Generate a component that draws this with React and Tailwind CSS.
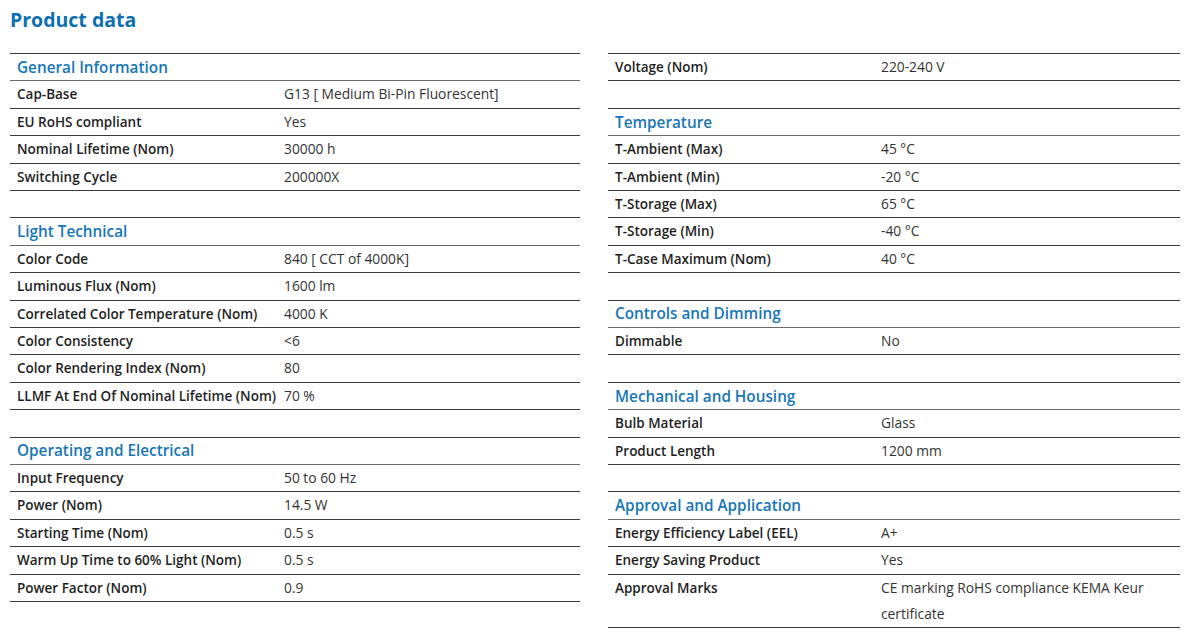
import React from "react";

const left = [
  { h: "General Information" },
  ["Cap-Base", "G13 [ Medium Bi-Pin Fluorescent]"],
  ["EU RoHS compliant", "Yes"],
  ["Nominal Lifetime (Nom)", "30000 h"],
  ["Switching Cycle", "200000X"],
  null,
  { h: "Light Technical" },
  ["Color Code", "840 [ CCT of 4000K]"],
  ["Luminous Flux (Nom)", "1600 lm"],
  ["Correlated Color Temperature (Nom)", "4000 K"],
  ["Color Consistency", "<6"],
  ["Color Rendering Index (Nom)", "80"],
  ["LLMF At End Of Nominal Lifetime (Nom)", "70 %"],
  null,
  { h: "Operating and Electrical" },
  ["Input Frequency", "50 to 60 Hz"],
  ["Power (Nom)", "14.5 W"],
  ["Starting Time (Nom)", "0.5 s"],
  ["Warm Up Time to 60% Light (Nom)", "0.5 s"],
  ["Power Factor (Nom)", "0.9"],
];

const right = [
  ["Voltage (Nom)", "220-240 V"],
  null,
  { h: "Temperature" },
  ["T-Ambient (Max)", "45 °C"],
  ["T-Ambient (Min)", "-20 °C"],
  ["T-Storage (Max)", "65 °C"],
  ["T-Storage (Min)", "-40 °C"],
  ["T-Case Maximum (Nom)", "40 °C"],
  null,
  { h: "Controls and Dimming" },
  ["Dimmable", "No"],
  null,
  { h: "Mechanical and Housing" },
  ["Bulb Material", "Glass"],
  ["Product Length", "1200 mm"],
  null,
  { h: "Approval and Application" },
  ["Energy Efficiency Label (EEL)", "A+"],
  ["Energy Saving Product", "Yes"],
  ["Approval Marks", "CE marking RoHS compliance KEMA Keur certificate"],
];

function Rows({ items, labelW }) {
  return (
    <div className="border-t border-[#3a3a3a]">
      {items.map((r, i) => {
        if (r === null)
          return <div key={i} className="h-[27.4px] border-b border-[#3a3a3a]" />;
        if (r.h)
          return (
            <div
              key={i}
              className="h-[27.4px] flex items-center px-[7px] border-b border-[#6a6a6a] text-[15.3px] font-semibold text-[#1776b6]"
            >
              {r.h}
            </div>
          );
        return (
          <div key={i} className="flex items-baseline min-h-[27.4px] border-b border-[#3a3a3a] leading-[26.4px]">
            <div className={`${labelW} shrink-0 pl-[7px] text-[13.5px] font-semibold text-[#1e1e1e] whitespace-nowrap`}>
              {r[0]}
            </div>
            <div className="flex-1 pl-[8px] pr-2 text-[13.8px] leading-[26.4px] text-[#333]">{r[1]}</div>
          </div>
        );
      })}
    </div>
  );
}

export default function App() {
  return (
    <main
      className="min-h-screen bg-white px-[10px] pt-[6px]"
      style={{ fontFamily: "'Open Sans', 'Noto Sans', sans-serif" }}
    >
      <h1 className="text-[19.5px] leading-[28px] font-bold text-[#0c6fb2]">Product data</h1>
      <div className="mt-[19px] flex gap-[28px] w-[1170px]">
        <div className="w-[570px]">
          <Rows items={left} labelW="w-[266px]" />
        </div>
        <div className="w-[572px]">
          <Rows items={right} labelW="w-[265px]" />
        </div>
      </div>
    </main>
  );
}
